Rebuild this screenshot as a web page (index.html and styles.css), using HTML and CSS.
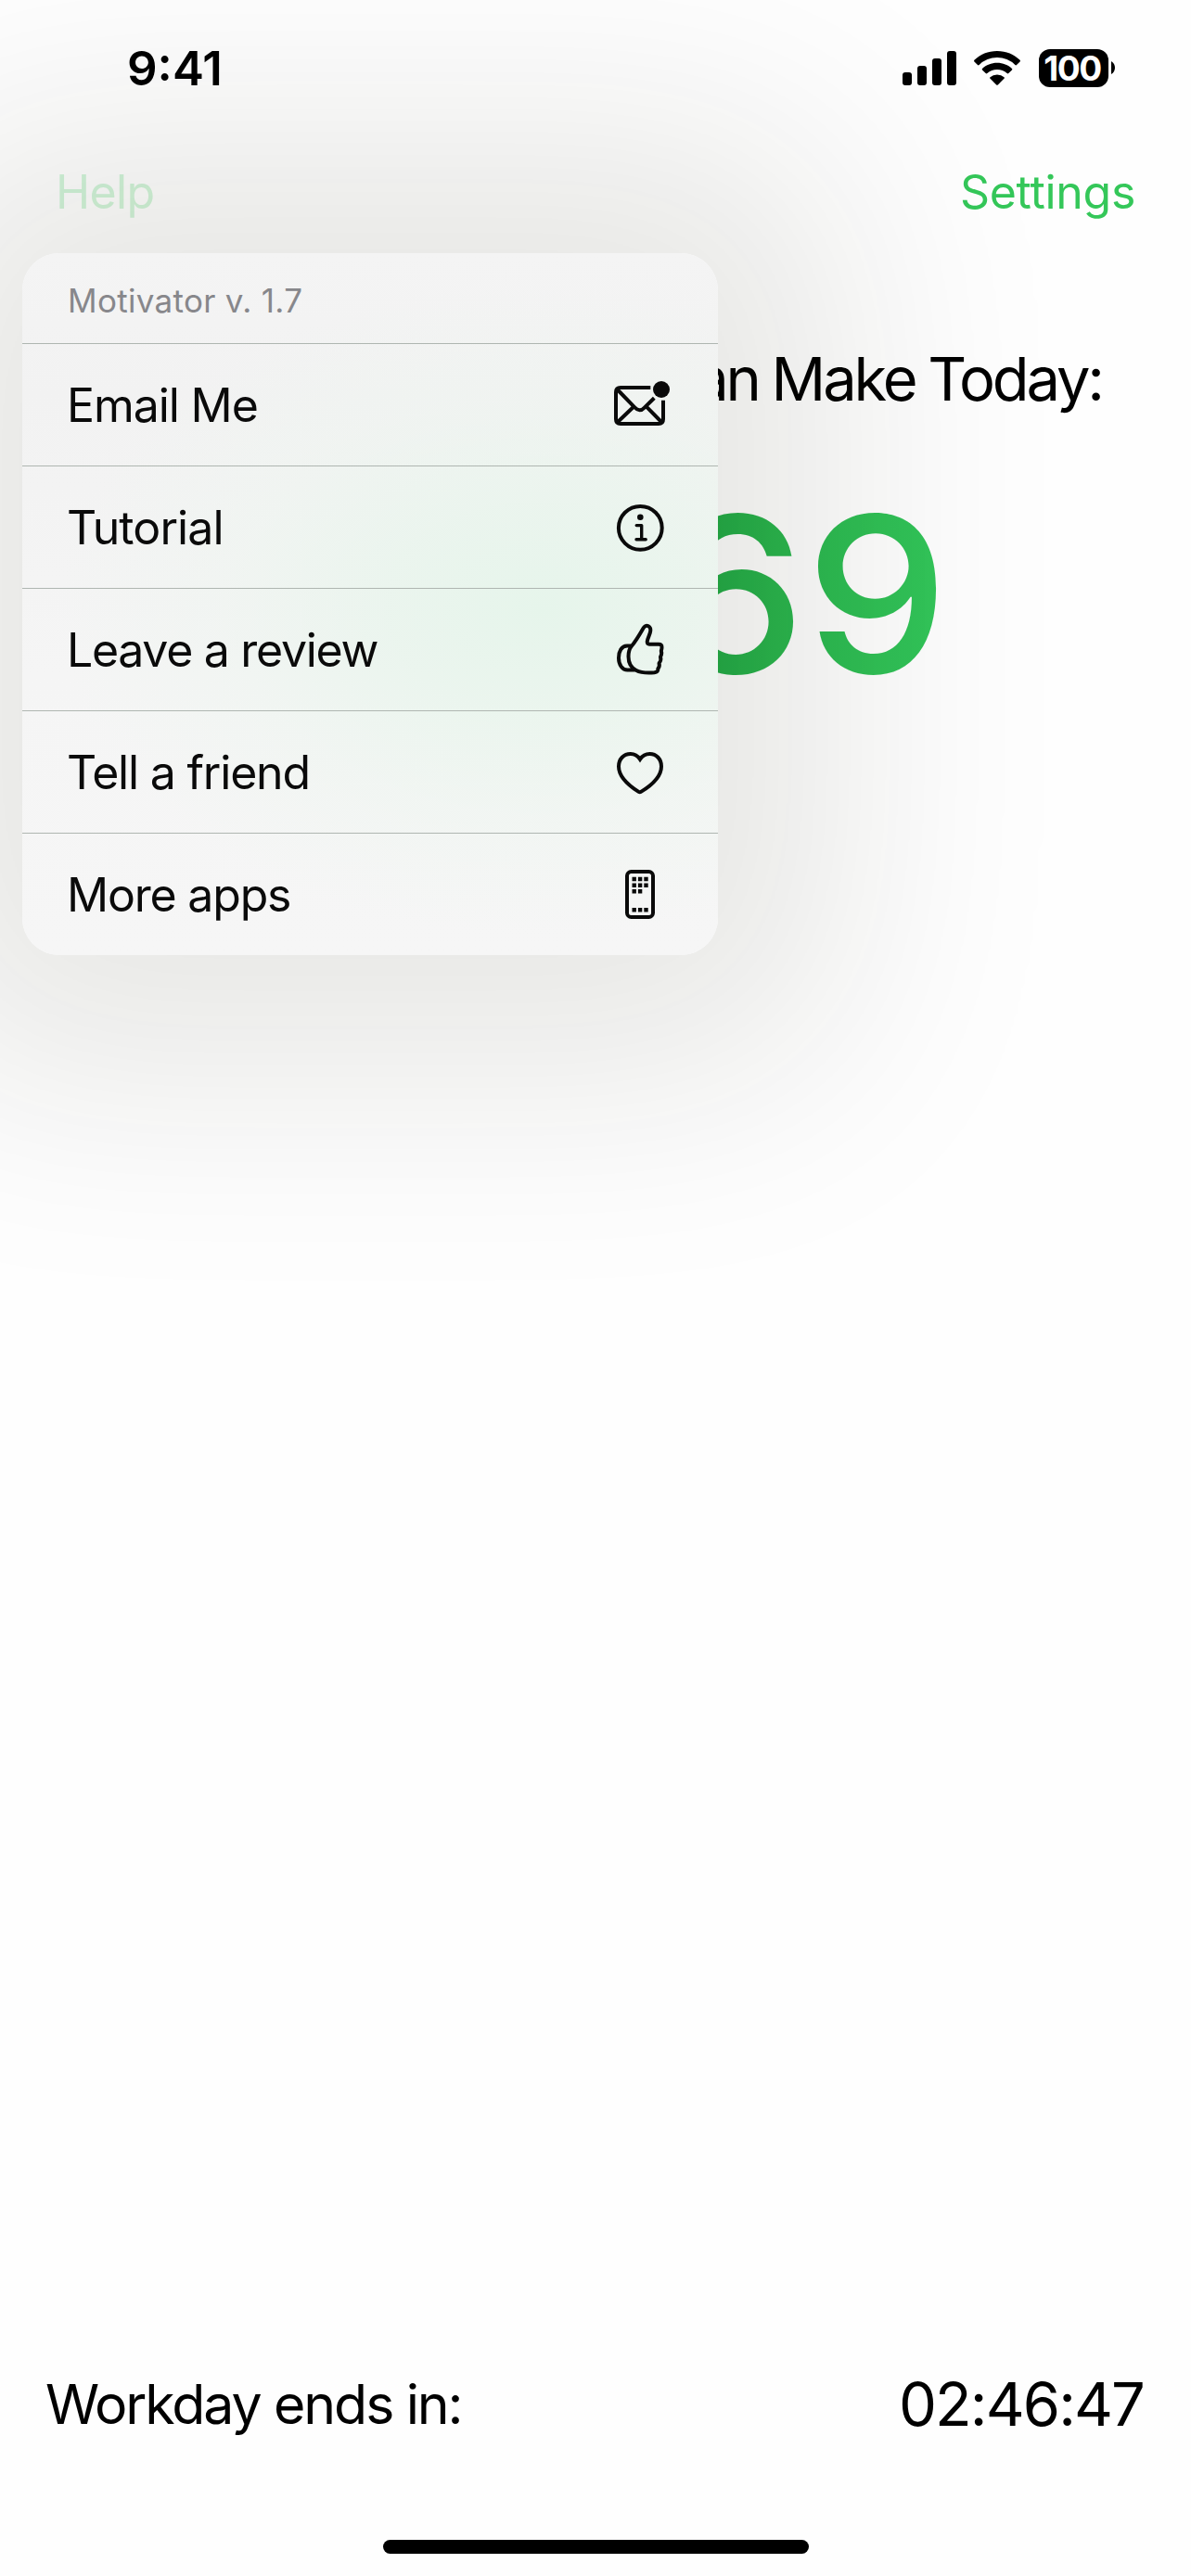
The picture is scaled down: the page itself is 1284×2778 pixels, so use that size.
FILE: index.html
```html
<!DOCTYPE html>
<html lang="en">
<head>
<meta charset="utf-8">
<title>Motivator</title>
<link rel="stylesheet" href="styles.css">
</head>
<body>
<div class="screen">
  <header class="status">
    <span class="clock">9:41</span>
    <div class="status-icons">
      <svg class="signal" viewBox="0 0 58 37"><rect x="0" y="23" width="10" height="14" rx="3"/><rect x="16" y="16" width="10" height="21" rx="3"/><rect x="32" y="8" width="10" height="29" rx="3"/><rect x="48" y="0" width="10" height="37" rx="3"/></svg>
      <svg class="wifi" viewBox="0 0 50 37"><path d="M25 0C34.600 0 43.500 3.700 49.600 9.800Q50.300 10.600 49.600 11.400L46 15Q45.200 15.800 44.400 15A27.500 27.500 0 0 0 5.600 15Q4.800 15.800 4 15L.4 11.400Q-.3 10.600 .4 9.800C6.500 3.700 15.400 0 25 0Z"/><path d="M25 12.800C31.200 12.800 36.800 15.100 41 19Q41.700 19.700 41 20.500L37.300 24.100Q36.600 24.800 35.700 24.100A15.700 15.700 0 0 0 14.300 24.100Q13.400 24.800 12.700 24.100L9 20.500Q8.300 19.700 9 19C13.200 15.100 18.800 12.800 25 12.800Z"/><path d="M25 25.500Q29.500 25.500 32.500 28.200Q33.200 28.900 32.500 29.700L25.800 36.400Q25 37.100 24.200 36.400L17.500 29.700Q16.800 28.900 17.500 28.200Q20.500 25.500 25 25.500Z"/></svg>
      <div class="battery"><span class="cell">100</span><svg class="nub" viewBox="0 0 4 14"><path d="M0 0Q4 2.500 4 7T0 14Z"/></svg></div>
    </div>
  </header>
  <nav class="nav"><span class="help">Help</span><span class="settings">Settings</span></nav>
  <main class="main">
    <h1 class="heading">an Make Today:</h1>
    <div class="amount">69</div>
  </main>
  <footer class="footer"><span class="label">Workday ends in:</span><span class="timer">02:46:47</span></footer>
  <div class="home"></div>

  <div class="menu">
    <div class="menu-title"><span>Motivator v. 1.7</span></div>
    <div class="item"><span class="t-email">Email Me</span>
      <svg class="icon" viewBox="0 0 72 73"><path d="M47.300 18H15Q10 18 10 23V52Q10 57 15 57H56Q61 57 61 52V31.700M11.500 20L30.500 39.500Q35.500 45 40.500 39.800L51.300 29.300M11.500 55.500L28.500 39.300M59.500 55.500L42.700 38.300"/><circle class="solid" cx="59" cy="20" r="9"/></svg></div>
    <div class="item"><span class="t-tutorial">Tutorial</span>
      <svg class="icon" viewBox="0 0 72 73"><circle cx="36.300" cy="37.300" r="23.400"/><circle class="solid" cx="36.300" cy="25.700" r="3.300"/><path class="thin round" d="M32.200 34.600H37.700V49.700M32 49.700H42.200"/></svg></div>
    <div class="item"><span class="t-review">Leave a review</span>
      <svg class="icon" viewBox="0 0 72 73"><path class="round" d="M41 11.700C43 9.700 47.700 11 47.300 16C47 20.500 43.800 24.500 43.700 28Q43.800 30.700 46 30.700H56Q59.700 30.700 59.500 34Q59.500 36 58.800 38Q60 41 58 44.500Q59.300 48 56.500 51.200Q57.600 54.700 55.300 57.200Q56 60.700 51.500 61.300Q38 62.300 32 59C26 56 23.500 51 23.500 44Q23.500 37 26.500 33.300C31 28 35.500 20.500 39.500 13.500Q40.200 12.400 41 11.700ZM26.700 32.500H22C16 32.500 13 38.500 13 45.500C13 53 17 58.500 22.500 58.500H31"/></svg></div>
    <div class="item"><span class="t-friend">Tell a friend</span>
      <svg class="icon" viewBox="0 0 72 73"><path d="M36 22.800C33.500 19 30 17 25.800 17C18.500 17 13 22.500 13 30.500C13 41 22 50 34.500 57.900Q35.800 58.700 37 57.900C50 50 59 41 59 30.500C59 22.500 53.500 17 46.500 17C42 17 38.500 19 36 22.800Z"/></svg></div>
    <div class="item"><span class="t-apps">More apps</span>
      <svg class="icon" viewBox="0 0 72 73"><rect x="22" y="12" width="28" height="49" rx="4.500"/><path class="dots" d="M27.500 20h4.400m2 0h4.400m2 0h4.400M27.500 26.700h4.400m2 0h4.400m2 0h4.400M27.500 33.300h4.400m2 0h4.400M27.500 53.300h4.400m2 0h4.400m2 0h4.400"/></svg></div>
  </div>
</div>
</body>
</html>
```
FILE: styles.css
```css
* { box-sizing: border-box; }
body { margin: 0; background: #fff; font-family: Inter, "Liberation Sans", sans-serif; color: #000; }
.screen { position: relative; width: 1284px; height: 2778px; overflow: hidden; display: flex; flex-direction: column; isolation: isolate; white-space: nowrap; background: #fefefe; }
.status, .nav, .footer, .item, .menu-title { display: flex; align-items: center; justify-content: space-between; }
.status { height: 146px; padding: 0 82px 0 137px; }
.clock { font-size: 51px; font-weight: 600; letter-spacing: 0; }
.status-icons { display: flex; align-items: center; }
.signal { width: 58px; height: 37px; margin-right: 19px; }
.wifi { width: 50px; height: 37px; margin-right: 20px; }
.battery { display: flex; align-items: center; gap: 3px; }
.cell { width: 75px; height: 41px; padding-right: 3px; border-radius: 12px; background: #000; color: #fff; font-size: 37px; line-height: 41px; font-weight: 700; text-align: center; letter-spacing: -1.500px; }
.nub { width: 4px; height: 14px; }
.nav { height: 122px; padding: 0 60px; font-size: 50px; }
.help { color: #d1f4d9; letter-spacing: -.6px; }
.settings { color: #34c759; letter-spacing: -.3px; }
.main { flex: 1; }
.heading { margin: 0; height: 281px; line-height: 281px; font-size: 65px; font-weight: 400; text-align: right; padding-right: 96px; letter-spacing: -3.1px; word-spacing: -1.500px; }
.amount { height: 183px; line-height: 183px; width: 1022px; text-align: right; font-size: 235px; font-weight: 500; color: transparent; background: linear-gradient(90deg, #22a945 760px, #2cba51 880px, #33c65a 1020px); background-clip: text; -webkit-background-clip: text; transform: scaleX(1.040); transform-origin: 1010px 50%; }
.footer { height: 100px; padding: 0 51px 0 49px; margin-bottom: 97px; }
.label { font-size: 59px; letter-spacing: -2.1px; }
.timer { font-size: 65px; letter-spacing: -1.900px; }
.home { width: 459px; height: 15px; border-radius: 8px; background: #000; margin: 0 auto 24px; }

.menu { position: absolute; z-index: 1; left: 24px; top: 273px; width: 750px; height: 757px; border-radius: 40px;
  box-shadow: 0 0 320px 130px rgba(26, 26, 12, .1);
  background:
    radial-gradient(ellipse 520px 350px at 560px 385px, #e6f5eb 0, #e8f5eccc 30%, #edf5ef77 65%, #f3f4f300 100%),
    linear-gradient(180deg, #f4f4f4 0, #f2f2f2 20%, #f5f5f5 60%, #f6f6f6 100%); }
.menu-title { height: 97px; padding: 4px 49px 0; font-size: 35px; color: #87878b; letter-spacing: .3px; }
.item { height: 132px; padding: 0 48px; border-top: 1px solid #afb6b1; font-size: 50px; color: #0a0a0a; }
.t-email { letter-spacing: -1.100px; }
.t-tutorial { letter-spacing: -.9px; }
.t-review { letter-spacing: -1.300px; }
.t-friend { letter-spacing: -1.200px; }
.t-apps { letter-spacing: -1.200px; }
.icon { width: 72px; height: 73px; fill: none; stroke: #0a0a0a; stroke-width: 4; }
.icon .solid { fill: #0a0a0a; stroke: none; }
.icon .thin { stroke-width: 3.400; }
.icon .round { stroke-linecap: round; stroke-linejoin: round; }
.icon .dots { stroke-width: 4.400; }
```
